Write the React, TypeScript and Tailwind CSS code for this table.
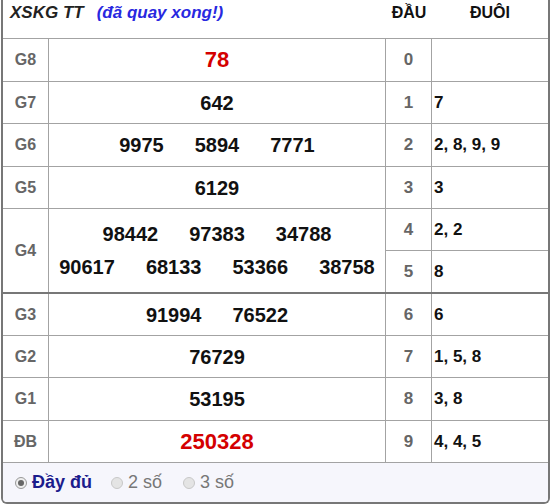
import React from 'react';

type Tail = [string, string];

interface RowProps {
  label: string;
  lines: string[][];
  red?: boolean;
  tails: Tail[];
  h: string;
  thick?: boolean;
}

function PrizeRow({ label, lines, red, tails, h, thick }: RowProps) {
  return (
    <div className={`flex ${h} ${thick ? 'border-b-2 border-[#777]' : 'border-b border-[#a3a3a3]'}`}>
      <div className="w-[46px] shrink-0 border-r border-[#a3a3a3] flex items-center justify-center text-[16px] font-bold text-[#666]">
        {label}
      </div>
      <div className="w-[337px] shrink-0 border-r border-[#a3a3a3] flex flex-col justify-center gap-[13px]">
        {lines.map((line, i) => (
          <div key={i} className="flex justify-center gap-[31px] leading-[20px]">
            {line.map((n) => (
              <span
                key={n}
                className={red ? 'text-[22px] font-bold text-[#d40000]' : 'text-[20px] font-bold text-[#111]'}
              >
                {n}
              </span>
            ))}
          </div>
        ))}
      </div>
      <div className="flex-1 flex flex-col">
        {tails.map(([d, t], i) => (
          <div key={d} className={`flex flex-1 ${i < tails.length - 1 ? 'border-b border-[#a3a3a3]' : ''}`}>
            <div className="w-[46px] shrink-0 border-r border-[#a3a3a3] flex items-center justify-center text-[17px] font-bold text-[#666]">
              {d}
            </div>
            <div className="flex-1 flex items-center pl-[2px] text-[17px] font-bold text-[#111]">{t}</div>
          </div>
        ))}
      </div>
    </div>
  );
}

function Radio({ checked }: { checked?: boolean }) {
  return (
    <span
      className={`w-[12px] h-[12px] rounded-full border flex items-center justify-center ${
        checked ? 'border-[#999] bg-[#eee]' : 'border-[#c8c8c8] bg-[#e4e4e4]'
      }`}
    >
      {checked && <span className="w-[6px] h-[6px] rounded-full bg-[#666]" />}
    </span>
  );
}

export default function App() {
  return (
    <div className="w-[550px] h-[504px] bg-white font-['Liberation_Sans',Arial,sans-serif]">
      <div className="ml-[1px] w-[549px] border-x-2 border-b-2 border-[#777] rounded-b-[6px] overflow-hidden">
        <div className="flex h-[39px] border-b border-[#a3a3a3]">
          <div className="w-[383px] shrink-0 pl-[7px] pt-[2px] flex items-start gap-[13px] italic font-bold text-[17px] leading-[21px]">
            <span className="text-[#222]">XSKG TT</span>
            <span className="text-[#2828e0]">(đã quay xong!)</span>
          </div>
          <div className="w-[46px] shrink-0 pt-[3px] flex justify-center font-bold text-[16px] leading-[20px] text-[#111]">
            ĐẦU
          </div>
          <div className="flex-1 pt-[3px] flex justify-center font-bold text-[16px] leading-[20px] text-[#111]">
            ĐUÔI
          </div>
        </div>

        <PrizeRow label="G8" lines={[['78']]} red tails={[['0', '']]} h="h-[43px]" />
        <PrizeRow label="G7" lines={[['642']]} tails={[['1', '7']]} h="h-[42px]" />
        <PrizeRow label="G6" lines={[['9975', '5894', '7771']]} tails={[['2', '2, 8, 9, 9']]} h="h-[43px]" />
        <PrizeRow label="G5" lines={[['6129']]} tails={[['3', '3']]} h="h-[42px]" />
        <PrizeRow
          label="G4"
          lines={[
            ['98442', '97383', '34788'],
            ['90617', '68133', '53366', '38758'],
          ]}
          tails={[
            ['4', '2, 2'],
            ['5', '8'],
          ]}
          h="h-[85px]"
          thick
        />
        <PrizeRow label="G3" lines={[['91994', '76522']]} tails={[['6', '6']]} h="h-[42px]" />
        <PrizeRow label="G2" lines={[['76729']]} tails={[['7', '1, 5, 8']]} h="h-[42px]" />
        <PrizeRow label="G1" lines={[['53195']]} tails={[['8', '3, 8']]} h="h-[43px]" />
        <PrizeRow label="ĐB" lines={[['250328']]} red tails={[['9', '4, 4, 5']]} h="h-[42px]" />

        <div className="h-[39px] bg-[#f6f6fc] flex items-center pl-[12px] text-[18px]">
          <label className="flex items-center gap-[5px]">
            <Radio checked />
            <span className="font-bold text-[#1c1c8c]">Đầy đủ</span>
          </label>
          <label className="flex items-center gap-[5px] ml-[19px]">
            <Radio />
            <span className="text-[#777]">2 số</span>
          </label>
          <label className="flex items-center gap-[5px] ml-[21px]">
            <Radio />
            <span className="text-[#777]">3 số</span>
          </label>
        </div>
      </div>
    </div>
  );
}
